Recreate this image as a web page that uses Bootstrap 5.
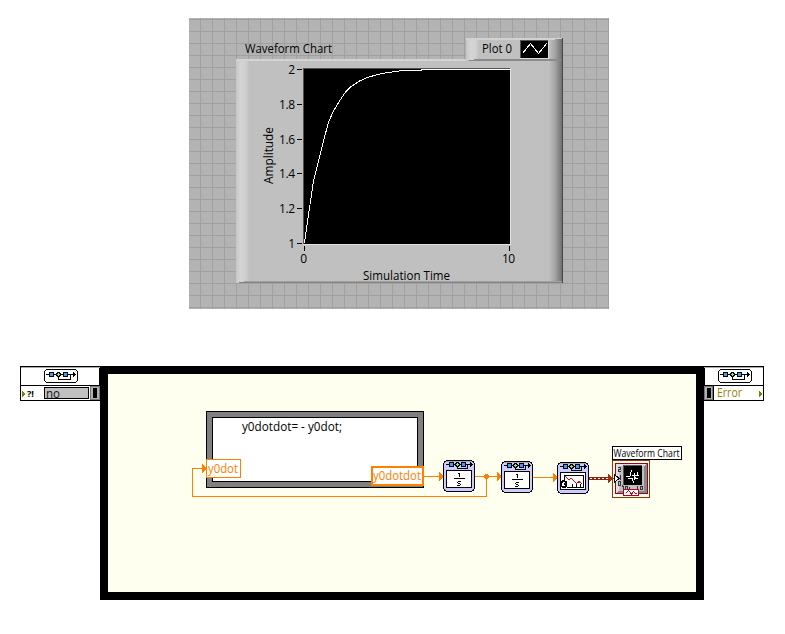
<!DOCTYPE html>
<html lang="en">
<head>
<meta charset="utf-8">
<title>Waveform Chart</title>
<link href="https://cdn.jsdelivr.net/npm/bootstrap@5.3.0/dist/css/bootstrap.min.css" rel="stylesheet">
<style>
body{width:785px;height:634px;overflow:hidden;background:#fff;color:#000;font:12px/16px "Open Sans","Noto Sans",sans-serif}
svg{display:block;shape-rendering:crispEdges}
svg text{font-family:"Open Sans","Noto Sans",sans-serif;font-size:12px}
.front-panel{width:420px;height:291px;margin:18px 0 0 189px;padding:20px 0 0 47px;background-color:#b3b3b3;
 background-image:linear-gradient(90deg,transparent 11px,#a0a0a0 11px),linear-gradient(transparent 11px,#a0a0a0 11px);background-size:12px 12px;background-position:0 0,0 2px}
.chart-head{width:327px;height:21px}
.legend-tab{width:97px;height:23px;z-index:1}
.block-diagram{margin:57px 0 0 20px;width:744px}
.term-in{width:80px;height:35px}
.term-out{width:60px;height:35px}
.sim-loop{width:604px;height:234px;border:8px solid #000;background:#fffff0}
</style>
<script src="https://cdn.jsdelivr.net/npm/bootstrap@5.3.0/dist/js/bootstrap.bundle.min.js"></script>
</head>
<body>
<main>
<section class="front-panel">
 <header class="chart-head d-flex justify-content-between">
  <svg width="120" height="21" viewBox="236 38 120 21"><text x="245" y="53" textLength="87" lengthAdjust="spacingAndGlyphs">Waveform Chart</text></svg>
  <div class="legend-tab position-relative">
   <svg width="97" height="23" viewBox="466 38 97 23">
    <defs>
     <linearGradient id="lit"><stop offset="0" stop-color="#c6c6c6"/><stop offset=".35" stop-color="#d5d5d5"/><stop offset=".75" stop-color="#d0d0d0"/><stop offset="1" stop-color="#c0c0c0"/></linearGradient>
     <linearGradient id="shade"><stop offset="0" stop-color="#c0c0c0"/><stop offset=".5" stop-color="#a0a0a0"/><stop offset="1" stop-color="#707070"/></linearGradient>
    </defs>
    <rect x="466" y="38" width="97" height="22" fill="#c0c0c0"/>
    <rect x="466" y="38" width="13" height="22" fill="url(#lit)"/>
    <rect x="549" y="38" width="13" height="22" fill="url(#shade)"/>
    <path d="M466 38.5H562M466 39.5H555" stroke="#d2d2d2"/>
    <path d="M469 60.5H561M474 59.5H561" stroke="#8b8b8b"/>
    <path d="M562.5 38V61" stroke="#484848"/>
    <text x="482" y="53" textLength="30" lengthAdjust="spacingAndGlyphs">Plot 0</text>
    <rect x="520" y="40" width="28" height="18"/><path d="M520.5 58V40.5H548" fill="none" stroke="#555"/><path d="M520 58.5H548.5V41" fill="none" stroke="#ddd"/>
    <path d="M522.5 53.5L530.5 43.5L538.5 53.5L547 43" fill="none" stroke="#fff"/>
   </svg>
  </div>
 </header>
 <svg width="327" height="224" viewBox="236 59 327 224">
  <rect x="236" y="59" width="327" height="224" fill="#c0c0c0"/>
  <rect x="236" y="59" width="13" height="224" fill="url(#lit)"/>
  <rect x="549" y="59" width="13" height="224" fill="url(#shade)"/>
  <path d="M236 59.5H466M236 60.5H466" stroke="#d2d2d2"/>
  <path d="M244 281.5H562" stroke="#a0a0a0"/><path d="M239 282.5H562" stroke="#858585"/>
  <path d="M562.5 59V283" stroke="#484848"/>
  <rect x="304" y="69" width="206" height="175"/>
  <path d="M303.5 244V68.5H510" fill="none" stroke="#505050"/>
  <path d="M303 244.5H510.5V69" fill="none" stroke="#e2e2e2"/>
  <polyline points="304.5,243 309.5,208 313.5,181 321.5,149 328.5,122 333.5,111 339.5,101 345.5,92 350.5,87 359.5,81 367.5,77.5 377.5,74.5 388,72.5 403,70.5 421,70.5 421,69.5 510,69.5" fill="none" stroke="#fff"/>
  <path d="M297 69.5H302M297 104.5H302M297 139.5H302M297 173.5H302M297 208.5H302M297 243.5H302M304.5 246V251M509.5 246V251" stroke="#000"/>
  <g text-anchor="end"><text x="295" y="74">2</text><text x="295" y="109" textLength="16">1.8</text><text x="295" y="144" textLength="16">1.6</text><text x="295" y="178" textLength="16">1.4</text><text x="295" y="213" textLength="16">1.2</text><text x="295" y="248">1</text></g>
  <text x="303.7" y="263" text-anchor="middle">0</text><text x="502" y="263" textLength="13">10</text>
  <text x="363" y="280" textLength="87" lengthAdjust="spacingAndGlyphs">Simulation Time</text>
  <text transform="translate(273 184) rotate(-90)" textLength="57" lengthAdjust="spacingAndGlyphs">Amplitude</text>
 </svg>
</section>

<section class="block-diagram d-flex align-items-start">
 <svg class="term-in flex-shrink-0" viewBox="20 366 80 35">
  <defs>
   <g id="square"><rect width="5" height="5"/><rect x="1" y="1" width="3" height="3" fill="#3aa0f0"/></g>
   <g id="diamond"><path d="M1 0H4V1H5V4H4V5H1V4H0V1H1Z"/><path d="M2 1H3V2H4V3H3V4H2V3H1V2H2Z" fill="#7cf07c"/></g>
   <path id="head" d="M0 0H1V1H2V2H3V3H2V4H1V5H0Z"/>
   <g id="badge-frame"><path d="M2 0H32V1H33V2H34V12H33V13H32V14H2V13H1V12H0V2H1V1H2Z"/><path d="M2 1H32V2H33V12H32V13H2V12H1V2H2Z" fill="#fff"/>
    <path d="M2 5.5H31M26.5 5V10.5H14.5V8" fill="none" stroke="#000"/>
    <use href="#square" x="5" y="3"/><use href="#diamond" x="12" y="3"/><use href="#square" x="19" y="3"/><use href="#head" x="29" y="3"/></g>
  </defs>
  <rect x="20.5" y="366.5" width="79" height="34" fill="#fff" stroke="#000"/>
  <path d="M21 367.5H100" stroke="#aaa"/><path d="M20 385.5H100" stroke="#000"/>
  <use href="#badge-frame" x="44" y="369"/>
  <path d="M22 391L26 394L22 397Z" fill="#808000"/>
  <text x="27" y="397" style="font-size:9px;font-weight:700" textLength="7" lengthAdjust="spacingAndGlyphs">?!</text>
  <rect x="44.5" y="387.5" width="44" height="11" fill="#c0c0c0" stroke="#000"/>
  <text x="46" y="398" textLength="14" lengthAdjust="spacingAndGlyphs" fill="#111">no</text>
  <rect x="90.5" y="386.5" width="9" height="13" fill="#b0b0b0" stroke="#777"/><rect x="93" y="388" width="4" height="10"/>
 </svg>

 <div class="sim-loop flex-shrink-0">
  <svg width="588" height="218" viewBox="108 374 588 218">
   <defs>
    <g id="block"><path d="M3 0H29V1H31V3H32V29H31V31H29V32H3V31H1V29H0V3H1V1H3Z"/><path d="M3 1H29V2H30V3H31V29H30V30H29V31H3V30H2V29H1V3H2V2H3Z" fill="#ccccff"/><path d="M3 1.5H29" stroke="#aaaabb"/>
     <path d="M3 4.5H30M24.5 4V8.5H14.5V6" fill="none" stroke="#000"/>
     <use href="#square" x="6" y="2"/><use href="#diamond" x="12" y="2"/><use href="#square" x="18" y="2"/><use href="#head" x="27" y="2"/></g>
    <g id="integrator"><use href="#block"/><rect x="3.5" y="10.5" width="25" height="17" fill="#fff" stroke="#000"/><path d="M11 18.5H22M15 13.5H16.5V17" fill="none" stroke="#000"/><path d="M15 21.5H18M14.5 22V23M15 23.5H17M17.5 24V25M14 25.5H17" fill="none" stroke="#000"/></g>
    <path id="tip" d="M0 -4H1V-3H2V-2H3V-1H4V0H5V1H4V2H3V3H2V4H1V5H0Z" fill="#ff8000"/>
   </defs>
   <rect x="206" y="411" width="218" height="77"/><rect x="207" y="412" width="216" height="75" fill="#808080"/>
   <rect x="212" y="417" width="206" height="65"/><rect x="213" y="418" width="204" height="63" fill="#fff"/>
   <text x="242" y="431" textLength="100" lengthAdjust="spacingAndGlyphs">y0dotdot= - y0dot;</text>
   <path d="M206 468.5H192.5V496.5H486.5V476M424 476.5H443M475 476.5H501" fill="none" stroke="#ff8000"/>
   <path d="M533 477.5H557" stroke="#ff8000"/>
   <rect x="206.5" y="459.5" width="34" height="18" fill="#fff" stroke="#ff8000"/>
   <rect x="372" y="467" width="51" height="18" fill="#fff" stroke="#ff8000" stroke-width="2"/>
   <text x="208" y="473" textLength="30" lengthAdjust="spacingAndGlyphs" fill="#ff8000">y0dot</text>
   <text x="373" y="480" textLength="48" lengthAdjust="spacingAndGlyphs" fill="#ff8000">y0dotdot</text>
   <use href="#tip" x="202" y="468"/><use href="#tip" x="439" y="476"/><use href="#tip" x="497" y="476"/><use href="#tip" x="553" y="477"/>
   <path d="M485 474H488V475H489V478H488V479H485V478H484V475H485Z" fill="#ff8000"/>
   <use href="#integrator" x="443" y="460"/><use href="#integrator" x="501" y="461"/>
   <use href="#block" x="557" y="462"/>
   <rect x="560.5" y="472.5" width="25" height="17" fill="#fff" stroke="#000"/>
   <path d="M564.5 481V475.5H583.5V487.5H567M572.5 487V484M576.5 487V484M580.5 487V484" fill="none" stroke="#000"/>
   <path d="M565.5 476.5L568.5 479.5L571.5 478.5L576.5 483.5L579 481.5L582.5 484.5" fill="none" stroke="#e00010"/>
   <path d="M562 480H565V481H567V487H566V488H562V487H561V481H562Z"/><path d="M562 483H563V482H565V483H564V485H565V486H562Z" fill="#fff"/>
   <rect x="589" y="477" width="20" height="3" fill="#882211"/><path d="M590 478.5H608" stroke="#fff" stroke-dasharray="2 2"/>
   <rect x="612.5" y="446.5" width="69" height="13" fill="#fff" stroke="#000"/>
   <text x="613.5" y="457" style="font-size:10.5px" textLength="66" lengthAdjust="spacingAndGlyphs">Waveform Chart</text>
   <rect x="612.5" y="460.5" width="37" height="37" fill="#fffff0" stroke="#993300"/>
   <rect x="615.5" y="463.5" width="32" height="30" fill="#e0e0e0" stroke="#a00020"/>
   <path d="M616 493H647V464L643 467V490H619Z" fill="#888"/><rect x="619" y="466" width="25" height="25" fill="#c0c0c0"/>
   <rect x="624" y="466" width="18" height="19"/><path d="M623.5 485V465.5H642" fill="none" stroke="#555"/>
   <path d="M626 476.5H630M630.5 476V472M631.5 472V470M632.5 478V481M633.5 481V483M634.5 480V473M632 475.5H639M635.5 477V479M636 478.5H638M637.5 475V472M628 478.5H632" fill="none" stroke="#fff"/>
   <path d="M618 467.5H620.5V469.5H618.5V471.5H621M620.5 475V480M618.5 482V485.5H620.5V481.5H618M622 485.5H623M621.5 486.5H623.5V489M625.5 489V486.5H627.5V489.5H625M629.5 489V486.5M637.5 486V490M640.5 486.5H642.5V489.5H640.5V486" fill="none" stroke="#333"/>
   <path d="M614 474L619 478.5L614 483Z" fill="#fff" stroke="#000"/>
   <path d="M608 474L614 478.5L608 483Z" fill="#993300"/>
   <rect x="623.5" y="489.5" width="15" height="6" fill="#fff" stroke="#b00020"/><path d="M625.5 493.5L628.5 490.5L631.5 494L633.5 491.5L636.5 494" fill="none" stroke="#b00020"/>
  </svg>
 </div>

 <svg class="term-out flex-shrink-0" viewBox="704 366 60 35">
  <rect x="704.5" y="366.5" width="59" height="34" fill="#fff" stroke="#000"/>
  <path d="M704 367.5H763" stroke="#aaa"/><path d="M704 385.5H764" stroke="#000"/>
  <use href="#badge-frame" x="718" y="369"/>
  <rect x="704.5" y="386.5" width="8" height="13" fill="#b0b0b0" stroke="#777"/><rect x="707" y="388" width="4" height="10"/><path d="M713.5 386V400" stroke="#000"/>
  <text x="717" y="397" textLength="25" lengthAdjust="spacingAndGlyphs" fill="#998000">Error</text>
  <path d="M759 391L763 394L759 397Z" fill="#808000"/>
 </svg>
</section>
</main>
</body>
</html>
